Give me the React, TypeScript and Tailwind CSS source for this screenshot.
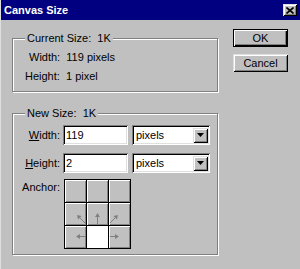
import React from "react";

// classic 3D bevels
const raised = "bg-[#c0c0c0] shadow-[inset_1px_1px_0_#dfdfdf,inset_-1px_-1px_0_#000,inset_2px_2px_0_#fff,inset_-2px_-2px_0_#808080]";
const sunken = "shadow-[inset_1px_1px_0_#808080,inset_-1px_-1px_0_#fff,inset_2px_2px_0_#000,inset_-2px_-2px_0_#dfdfdf]";
const etched = "border border-[#808080] shadow-[1px_1px_0_#fff,inset_1px_1px_0_#fff]";

type Pt = { x1: number; y1: number; x2: number; y2: number };

const Arrow = ({ x1, y1, x2, y2 }: Pt) => {
  const dx = x2 - x1;
  const dy = y2 - y1;
  const len = Math.hypot(dx, dy);
  const ux = dx / len;
  const uy = dy / len;
  const bx = x2 - ux * 4;
  const by = y2 - uy * 4;
  const pts = `${x2},${y2} ${bx + -uy * 2.5},${by + ux * 2.5} ${bx - -uy * 2.5},${by - ux * 2.5}`;
  return (
    <svg width="21" height="22" viewBox="0 0 21 22" className="block">
      <line x1={x1} y1={y1} x2={bx} y2={by} stroke="#808080" strokeWidth="1" />
      <polygon points={pts} fill="#808080" />
    </svg>
  );
};

const arrows: Record<number, Pt> = {
  3: { x1: 20, y1: 20, x2: 12, y2: 12 },
  4: { x1: 10.5, y1: 22, x2: 10.5, y2: 10 },
  5: { x1: 1, y1: 20, x2: 9, y2: 12 },
  6: { x1: 20, y1: 10.5, x2: 11, y2: 10.5 },
  8: { x1: 1, y1: 10.5, x2: 10, y2: 10.5 },
};

const Field = ({ value }: { value: string }) => (
  <div className={`w-[65px] h-[20px] bg-white ${sunken} flex items-center pl-[3px] leading-[13px]`}>
    {value}
  </div>
);

const Dropdown = ({ value }: { value: string }) => (
  <div className={`w-[78px] h-[20px] bg-white ${sunken} flex items-center p-[2px]`}>
    <span className="flex-1 pl-[2px] leading-[13px]">{value}</span>
    <div className={`w-[15px] h-[15px] ${raised} flex items-center justify-center`}>
      <svg width="7" height="4" viewBox="0 0 7 4">
        <polygon points="0,0 7,0 3.5,4" fill="#000" />
      </svg>
    </div>
  </div>
);

export default function App() {
  return (
    <div className="w-[300px] h-[269px] bg-[#c0c0c0] border-l border-[#dfdfdf] text-black text-[11px] font-['Liberation_Sans',Arial,sans-serif] overflow-hidden">
      {/* title bar */}
      <div className="h-[20px] bg-[#000080] flex items-center justify-between pl-[3px] pr-[3px]">
        <span className="text-white font-bold text-[11px] leading-[13px]">Canvas Size</span>
        <div className={`w-[14px] h-[12px] ${raised} flex items-center justify-center`}>
          <svg width="8" height="7" viewBox="0 0 8 7">
            <path d="M0.5 0.5 L7.5 6.5 M7.5 0.5 L0.5 6.5" stroke="#000" strokeWidth="1.6" />
          </svg>
        </div>
      </div>

      <div className="flex pl-[11px] pt-[9px]">
        <div className="flex flex-col mt-[9px]">
          {/* current size */}
          <div className={`relative w-[206px] h-[54px] ${etched} pl-[12px] pt-[12px] flex flex-col gap-[6px] leading-[13px]`}>
            <span className="absolute -top-[7px] left-[12px] px-[2px] bg-[#c0c0c0] whitespace-pre leading-[13px]">Current Size:  1K</span>
            <span className="ml-[4px] whitespace-pre">Width:  119 pixels</span>
            <span className="whitespace-pre">Height:  1 pixel</span>
          </div>

          {/* new size */}
          <div className={`relative mt-[21px] w-[206px] h-[142px] ${etched} pt-[11px] flex flex-col`}>
            <span className="absolute -top-[7px] left-[12px] px-[2px] bg-[#c0c0c0] whitespace-pre leading-[13px]">New Size:  1K</span>
            <div className="flex items-center gap-[3px]">
              <span className="w-[47px] text-right leading-[13px]"><u>W</u>idth:</span>
              <Field value="119" />
              <div className="ml-[1px]"><Dropdown value="pixels" /></div>
            </div>
            <div className="flex items-center gap-[3px] mt-[8px]">
              <span className="w-[47px] text-right leading-[13px]"><u>H</u>eight:</span>
              <Field value="2" />
              <div className="ml-[1px]"><Dropdown value="pixels" /></div>
            </div>
            <div className="flex items-start gap-[4px] mt-[6px]">
              <span className="w-[47px] text-right leading-[13px] mt-[2px]">Anchor:</span>
              <div className="grid grid-cols-[repeat(3,21px)] grid-rows-[repeat(3,22px)] gap-[1px] p-[1px] bg-black">
                {Array.from({ length: 9 }).map((_, i) => (
                  <div
                    key={i}
                    className={i === 7 ? "bg-white" : "bg-[#c0c0c0] shadow-[inset_1px_1px_0_#fff,inset_-1px_-1px_0_#808080]"}
                  >
                    {arrows[i] && <Arrow {...arrows[i]} />}
                  </div>
                ))}
              </div>
            </div>
          </div>
        </div>

        {/* buttons */}
        <div className="ml-[15px] flex flex-col gap-[7px]">
          <div className="w-[55px] h-[18px] border border-black bg-[#c0c0c0] shadow-[inset_1px_1px_0_#fff,inset_-1px_-1px_0_#000,inset_-2px_-2px_0_#808080] flex items-center justify-center leading-[13px]">
            OK
          </div>
          <div className={`w-[55px] h-[18px] ${raised} flex items-center justify-center leading-[13px]`}>
            Cancel
          </div>
        </div>
      </div>
    </div>
  );
}
